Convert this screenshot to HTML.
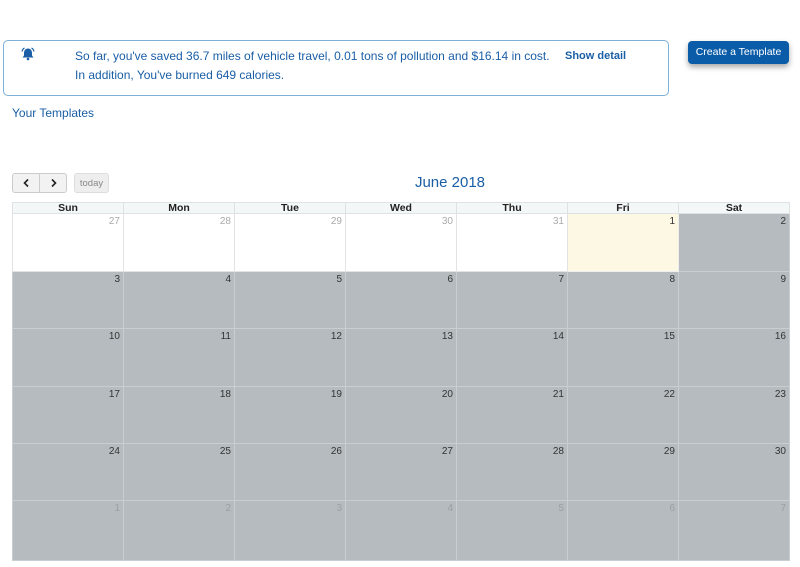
<!DOCTYPE html><html><head><style>
body{margin:0;width:800px;height:567px;background:#fff;font-family:"Liberation Sans",sans-serif;position:relative;overflow:hidden}
.alert{position:absolute;left:3px;top:40px;width:666px;height:56px;border:1px solid #7fb0d8;border-radius:5px;box-sizing:border-box}
.msg{position:absolute;left:75px;top:47px;color:#1a5ea6;font-size:12px;line-height:19px}
.sd{position:absolute;left:565px;top:50px;font-weight:bold;font-size:11px;color:#1a5ea6}
.btn{position:absolute;left:688px;top:41px;width:101px;height:23px;background:#0a5ca8;border-radius:4px;color:#fff;font-size:10.5px;text-align:center;line-height:22px;box-shadow:0 3px 6px rgba(0,0,0,.35)}
.yt{position:absolute;left:12px;top:106px;color:#1a5ea6;font-size:12px}
.nav{position:absolute;left:12px;top:173px;width:55px;height:20px;border:1px solid #ccc;border-radius:3px;background:#f2f2f2;box-sizing:border-box}
.today{position:absolute;left:74px;top:173px;width:35px;height:20px;border:1px solid #ddd;border-radius:3px;background:#eee;color:#888;font-size:9.5px;text-align:center;line-height:19px;box-sizing:border-box}
.title{position:absolute;left:0;width:900px;top:174px;text-align:center;color:#1a5ea6;font-size:15px}
table{position:absolute;left:12px;top:202px;border-collapse:collapse;width:778px;table-layout:fixed}
th{background:#f4f7f7;border:1px solid #dde3e3;font-size:10.5px;height:10px;line-height:10px;padding:0;color:#222}
td{border:1px solid #c9cfd1;height:56px;vertical-align:top;text-align:right;font-size:10px;padding:2px 3px 0 0;background:#b5bbbf;color:#333;box-sizing:border-box}
td.o{color:#aaa}td.w{background:#fff;border-color:#e3e3e3}td.t{background:#fcf8e3;border-color:#eee}
td.g{color:#9aa0a4}
</style></head><body>
<div class="alert"></div>
<svg style="position:absolute;left:21px;top:47px" width="14" height="14" viewBox="0 0 14 14"><path d="M7 1.5c-2.5 0-4 2-4 4.5v2.5L1.5 10.5h11L11 8.5V6c0-2.5-1.5-4.5-4-4.5z" fill="#1a5ea6"/><circle cx="7" cy="12" r="1.3" fill="#1a5ea6"/><path d="M1 4.5Q1.5 2 3.5 1M13 4.5Q12.5 2 10.5 1" stroke="#1a5ea6" stroke-width="1.2" fill="none"/></svg>
<div class="msg">So far, you've saved 36.7 miles of vehicle travel, 0.01 tons of pollution and $16.14 in cost.<br>In addition, You've burned 649 calories.</div>
<div class="sd">Show detail</div>
<div class="btn">Create a Template</div>
<div class="yt">Your Templates</div>
<div class="nav"><svg style="position:absolute;left:0;top:0" width="53" height="18"><path d="M15 5.5L11.5 9 15 12.5M39 5.5L42.5 9 39 12.5" stroke="#222" stroke-width="1.6" fill="none"/><line x1="26.5" y1="0" x2="26.5" y2="18" stroke="#ccc"/></svg></div>
<div class="today">today</div>
<div class="title">June 2018</div>
<table>
<tr><th>Sun</th><th>Mon</th><th>Tue</th><th>Wed</th><th>Thu</th><th>Fri</th><th>Sat</th></tr>
<tr style="height:58px"><td class="w o">27</td><td class="w o">28</td><td class="w o">29</td><td class="w o">30</td><td class="w o">31</td><td class="t">1</td><td>2</td></tr>
<tr style="height:57px"><td>3</td><td>4</td><td>5</td><td>6</td><td>7</td><td>8</td><td>9</td></tr>
<tr style="height:58px"><td>10</td><td>11</td><td>12</td><td>13</td><td>14</td><td>15</td><td>16</td></tr>
<tr style="height:57px"><td>17</td><td>18</td><td>19</td><td>20</td><td>21</td><td>22</td><td>23</td></tr>
<tr style="height:57px"><td>24</td><td>25</td><td>26</td><td>27</td><td>28</td><td>29</td><td>30</td></tr>
<tr style="height:60px"><td class="g">1</td><td class="g">2</td><td class="g">3</td><td class="g">4</td><td class="g">5</td><td class="g">6</td><td class="g">7</td></tr>
</table>
</body></html>
